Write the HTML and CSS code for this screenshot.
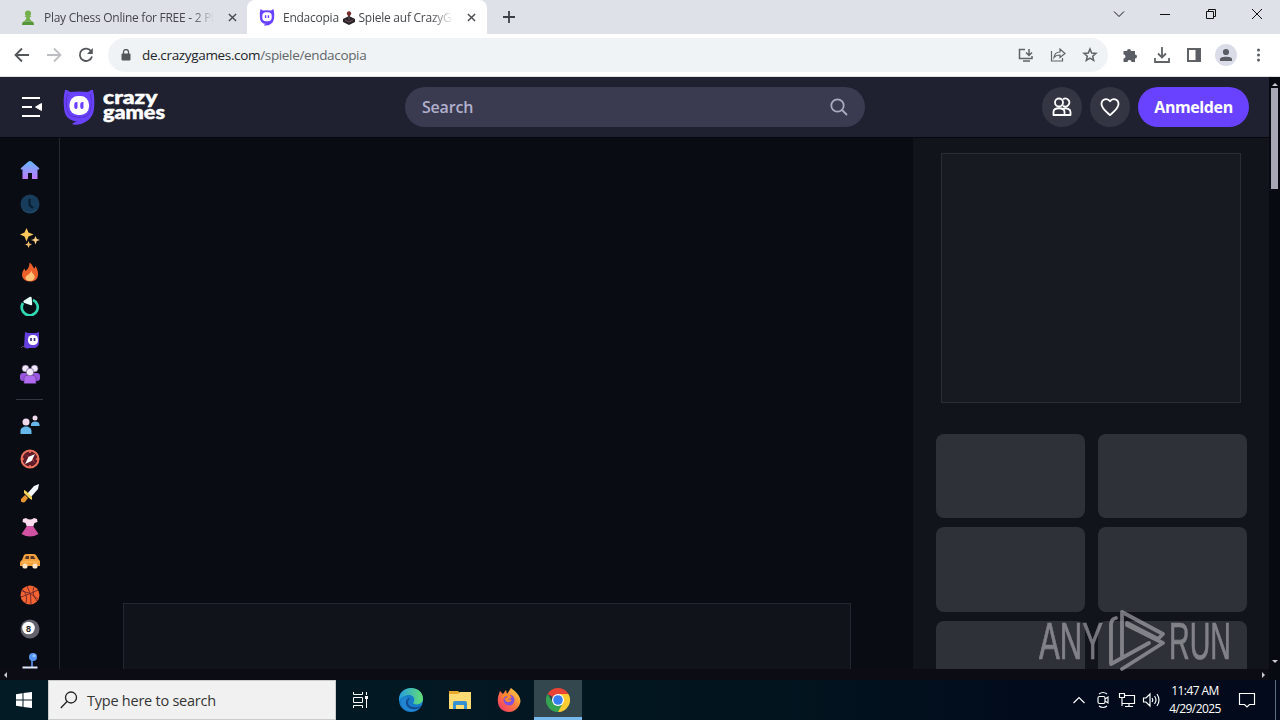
FILE: index.html
```html
<!DOCTYPE html>
<html lang="de">
<head>
<meta charset="utf-8">
<title>Endacopia - CrazyGames</title>
<link rel="stylesheet" href="styles.css">
</head>
<body>
<div class="tabs">
  <div class="tab">
    <svg class="fav" viewBox="0 0 16 16"><g fill="#74b04c"><circle cx="8" cy="4" r="3.1"/><path d="M4.400 6.500h7.200l-2 1.600c.2 2 1.200 2.800 2.800 4H3.600c1.600-1.200 2.600-2 2.800-4z"/><path d="M2 15.500c0-2.500 1-3.500 2-3.500h8c1 0 2 1 2 3.500z" fill="#55963b"/></g></svg>
    <span class="tabname first">Play Chess Online for FREE - 2 Pl</span>
    <svg class="x" viewBox="0 0 10 10"><path d="M1 1l8 8M9 1L1 9"/></svg>
  </div>
  <div class="tab active">
    <svg class="fav" viewBox="0 0 32 36"><path fill="#6842ff" d="M2 1Q3 0 7 3Q16 2 25 3Q29 0 30 1Q32 9 31 20Q30 28 24 32Q18 36 10 35Q8 33.500 14 32Q1 31 1 18Q0 8 2 1z"/><rect x="6" y="7" width="20" height="19" rx="8" fill="#fff"/><path d="M13 13v6M19 13v6" stroke="#6842ff" stroke-width="3"/></svg>
    <span class="tabname second">Endacopia <svg class="joy" viewBox="0 0 14 14"><path d="M1 8l6-3 6 3v3l-6 3-6-3z" fill="#292329"/><path d="M7 3v6" stroke="#453c40" stroke-width="2"/><circle cx="7" cy="2.500" r="2.200" fill="#792c2d"/><path d="M3 9l4 2 4-2" stroke="#78585a" fill="none"/></svg> Spiele auf CrazyGa</span>
    <svg class="x" viewBox="0 0 10 10"><path d="M1 1l8 8M9 1L1 9"/></svg>
  </div>
  <svg class="plus" viewBox="0 0 12 12"><path d="M6 0v12M0 6h12"/></svg>
  <div class="wincontrols">
    <svg viewBox="0 0 12 12"><path d="M1 3.500l5 5 5-5"/></svg>
    <svg viewBox="0 0 12 12"><path d="M1 6.500h10"/></svg>
    <svg viewBox="0 0 12 12"><path d="M1.500 3.500h7v7h-7zM3.500 3.500v-2h7v7h-2"/></svg>
    <svg viewBox="0 0 12 12"><path d="M1 1l10 10M11 1L1 11"/></svg>
  </div>
</div>
<div class="toolbar">
  <svg class="nav" viewBox="0 0 16 16"><path d="M15 8H2M8 1.500L1.500 8 8 14.500"/></svg>
  <svg class="nav off" viewBox="0 0 16 16"><path d="M1 8h13M8 1.500L14.500 8 8 14.500"/></svg>
  <svg class="nav" viewBox="0 0 16 16"><path d="M13.300 4.500A6.200 6.200 0 1 0 14 9.500"/><path d="M14.800 1v6H9z" fill="#53565a" stroke="none"/></svg>
  <div class="address">
    <svg class="lock" viewBox="0 0 10 12"><rect y="4.500" x=".5" width="9" height="7" rx="1" fill="#53565a"/><path d="M2.500 5V3a2.500 2.500 0 0 1 5 0v2" fill="none" stroke="#53565a" stroke-width="1.300"/></svg>
    <span class="url"><b>de.crazygames.com</b>/spiele/endacopia</span>
    <div class="addressicons">
      <svg viewBox="0 0 16 16"><path d="M7 2.500H1.500v9H14V9M5 14h7M11 2v6M8 5.500l3 3 3-3"/></svg>
      <svg viewBox="0 0 16 16"><path d="M1.500 4v10h11v-3M4 10.500c.5-4 3-5.500 6-5.500V2l5 4.500-5 4V8c-3 0-4.500.5-6 2.500z" stroke-width="1.200"/></svg>
      <svg viewBox="0 0 16 16"><path d="M8 2l1.700 4 4.300.4-3.300 2.900 1 4.200L8 11.200l-3.700 2.300 1-4.200L2 6.400 6.300 6z"/></svg>
    </div>
  </div>
  <div class="tools">
    <svg viewBox="0 0 16 16"><path class="solid" d="M1.500 4H5a2 2 0 1 1 4 0h4v3.500a2 2 0 1 1 0 4V15H9.500a2 2 0 0 0-4 0h-4v-3.500a2 2 0 0 0 0-4z"/></svg>
    <svg viewBox="0 0 16 16"><path d="M8 0v10M4 6.500l4 4 4-4M1 11v4h14v-4" stroke-width="1.800"/></svg>
    <svg viewBox="0 0 16 16"><path d="M2 2h12v12H2z" stroke-width="2"/><path class="solid" d="M9.500 2H14v12H9.500z"/></svg>
    <div class="avatar"><svg viewBox="0 0 16 16"><circle class="solid" cx="8" cy="5" r="3.100"/><path class="solid" d="M2 14v-2c0-3 12-3 12 0v2z"/></svg></div>
    <svg viewBox="0 0 16 16"><g class="solid"><circle cx="8.500" cy="3" r="1.500"/><circle cx="8.500" cy="8" r="1.500"/><circle cx="8.500" cy="13" r="1.500"/></g></svg>
  </div>
</div>
<div class="page">
  <div class="site">
    <header>
      <svg class="menu" viewBox="0 0 22 20"><path d="M1 1h18M1 10h10M1 19h18" stroke="#fff" stroke-width="1.800"/><path d="M14.500 10l6-3.500v7z" fill="#fff" stroke="#fff" stroke-linejoin="round"/></svg>
      <svg class="mascot" viewBox="0 0 32 36"><path fill="#6842ff" d="M2 1Q3 0 7 3Q16 2 25 3Q29 0 30 1Q32 9 31 20Q30 28 24 32Q18 36.500 10 35.500Q8 34 14 32.500Q1 31 1 18Q0 8 2 1z"/><path d="M5 5c-3 5-2 17 2 21 5 3 14 3 18 0 4-5 4-15 2-21" fill="none" stroke="#5632cf"/><rect x="6.500" y="7" width="19.500" height="19" rx="8.500" fill="#fff"/><path d="M11.500 14q1-1.500 3-1v5.500q0 1.500-2 1.500-2-1-1-6zM17.500 14q1-1.500 3-1v5.500q0 1.500-2 1.500-2-1-1-6z" fill="#6842ff"/></svg>
      <svg class="wordmark" viewBox="0 0 64 37"><text x="0" y="14.500" textLength="54.500" lengthAdjust="spacingAndGlyphs">crazy</text><text x="0" y="30" textLength="62" lengthAdjust="spacingAndGlyphs">games</text></svg>
      <div class="search"><span>Search</span><svg viewBox="0 0 18 18"><circle cx="7.500" cy="7.500" r="6.200"/><path d="M12 12l5 5"/></svg></div>
      <div class="actions">
        <div class="round"><svg viewBox="0 0 20 20"><circle cx="7" cy="5.500" r="4"/><path d="M11 2.200a4 4 0 1 1 0 6.600M1.500 18v-3c0-5 11-5 11 0v3zM11 11.700c4-1 7.500.5 7.500 3.300v3h-6"/></svg></div>
        <div class="round"><svg viewBox="0 0 20 20"><path d="M10 18C6 14.500 1.500 11.500 1.500 7c0-5 6-6.500 8.500-2.700C12.500.5 18.500 2 18.500 7c0 4.500-4.500 7.500-8.500 11z"/></svg></div>
        <div class="login">Anmelden</div>
      </div>
    </header>
    <div class="content">
      <aside>
        <svg viewBox="0 0 20 20"><defs><linearGradient id="home" x2="0" y2="1"><stop stop-color="#64b8ff"/><stop offset="1" stop-color="#c078f8"/></linearGradient></defs><path d="M1 9.500Q0 9 1.500 7.500l7-6q1.500-1 3 0l7 6q1.500 1.500.5 2h-1.500V19H12v-6H8v6H2.500V9.500z" fill="url(#home)"/></svg>
        <svg viewBox="0 0 20 20"><circle cx="10" cy="10" r="9.500" fill="#183c5c"/><path d="M9.500 5v6l3.500 3" stroke="#071b2c" stroke-width="2" fill="none"/><path d="M3 16q7 5 14 0" stroke="#254f66" fill="none"/></svg>
        <svg viewBox="0 0 20 20"><path d="M6.500 0L8.500 4.500l5 2-5 2-2 5-2-5-4.500-2 4.500-2z" fill="#ffc85b"/><path d="M15.500 8l1.300 3 3.200 1-3.200 1-1.300 3.500-1.300-3.500-3.200-1 3.200-1z" fill="#ffcf85"/><path d="M8.500 13l1 2.500 2.500 1-2.500 1-1 2.500-1-2.500-2.500-1 2.500-1z" fill="#f5bd6b"/></svg>
        <svg viewBox="0 0 20 20"><path d="M9.500.5c4 3 3 5 5 6l1-2.500c4 6 4 15.500-5 15.500S0 12 4.500 6.500l1 2.500c3-2 4-5 4-8.500z" fill="#ed602a"/><path d="M11.500 8c0 4 4 4 3 8-1 4-9 4-9 0 0-3 6-4 6-8z" fill="#ffc276"/></svg>
        <svg viewBox="0 0 20 20"><path d="M3 7a8 8 0 1 0 10-3" fill="none" stroke="#32d8b2" stroke-width="2.700"/><path d="M4 4.500L9.500 1q2-1 2.200 1l.5 6q0 2-2 1L4.500 7q-2-1-.5-2.500z" fill="#e8fff7"/></svg>
        <svg viewBox="0 0 20 20"><path d="M5 2l3 1h8l3-1v10q0 6-6 6H9q-2 1.500-5-1z" fill="#6640df"/><rect x="8" y="5" width="10" height="10" rx="4.500" fill="#fff"/><path d="M11 8v3M14.500 8v3" stroke="#42298b" stroke-width="1.700"/><path d="M1 18l2-2 3 2" fill="none" stroke="#56466e"/></svg>
        <svg viewBox="0 0 20 20"><g fill="#9856df"><rect x="0" y="9" width="9" height="8" rx="3"/><rect x="11" y="9" width="9" height="8" rx="3"/><path d="M4 19.500v-5c0-5 12-5 12 0v5z" fill="#b06af0" stroke="#56337c" stroke-width=".6"/></g><g fill="#f2e8ff" stroke="#514168" stroke-width=".6"><circle cx="5.500" cy="4.500" r="3.500"/><circle cx="14.500" cy="4.500" r="3.500"/><circle cx="10" cy="8" r="3.800"/></g></svg>
        <hr>
        <svg viewBox="0 0 20 20"><g fill="#65b8e9"><path d="M.5 19v-3c0-6 11-6 11 0v3zM11 11V9.500c0-4 8.500-4 8.500 0V11z"/></g><g fill="#eed9ed"><circle cx="6" cy="7" r="3.500"/><circle cx="15" cy="3" r="2.500"/></g></svg>
        <svg viewBox="0 0 20 20"><circle cx="10" cy="10" r="8.500" fill="#5e1b2a" stroke="#ed7560" stroke-width="2"/><path d="M5 6l4 2 6 6-3-6z" fill="#b54742"/><path d="M5 15l3.500-7L15 5l-3.500 7z" fill="#fff"/><path d="M10 2v2m8 6h-2m-6 8v-2M2 10h2" stroke="#ff6c52" stroke-width="1.500"/></svg>
        <svg viewBox="0 0 20 20"><path d="M7 11l7-8 5-2-1 5-7 8z" fill="#f4f6ff"/><path d="M4 7l2 1 6 6v3l-3-2-5-5z" fill="#f4d35a"/><path d="M1 16l4-4 3 3-3 4q-2 1-4-.5z" fill="#e89530"/></svg>
        <svg viewBox="0 0 20 20"><path d="M3 2l3-1q4 3 8 0l3 1 .5 3-3 1-1.500 4H7L5.500 6l-3-1z" fill="#ffdced"/><path d="M7 9h6l5.500 8q-8.500 5-17 0z" fill="#d152a2"/></svg>
        <svg viewBox="0 0 20 20"><path d="M2 9l2-5q1-1 3-1h6q2 0 3 1l3 5q2 1 1 6H0q-.5-5 2-6z" fill="#f5a13c"/><path d="M5 8l1-3h3v3zm5.500 0V5h3l2 3z" fill="#563626"/><path d="M2 11h16" stroke="#fbc264"/><circle cx="5" cy="15" r="2.600" fill="#ffe4c6"/><circle cx="15" cy="15" r="2.600" fill="#ffe4c6"/></svg>
        <svg viewBox="0 0 20 20"><circle cx="10" cy="10" r="9.500" fill="#f46432"/><path d="M2 6q9 1 16 8M1 12Q10 9 18 5M7 1q5 8 4 18M14 2q-3 7 3 14M3 5q5 5 3 13" fill="none" stroke="#7a2c2b"/></svg>
        <svg viewBox="0 0 20 20"><circle cx="10" cy="10" r="9.500" fill="#62616c"/><circle cx="8.500" cy="9" r="6.300" fill="#fff"/><text class="eight" x="8.500" y="12.500">8</text></svg>
        <svg viewBox="0 0 20 20"><path d="M12 5v9" stroke="#4d79cf" stroke-width="2"/><circle cx="13" cy="4" r="4" fill="#5795f5"/><circle cx="14" cy="2.700" r="1.500" fill="#9dc7ff"/><rect x="2.500" y="13.500" width="15" height="2" fill="#e1e9ff"/></svg>
      </aside>
      <main><div class="gamead"></div></main>
      <section class="rail">
        <div class="sidead"></div>
        <div class="cards"><i></i><i></i><i></i><i></i><i></i><i></i></div>
      </section>
    </div>
    <div class="hscroll"><svg viewBox="0 0 6 6"><path d="M5 0v6L2 3z"/></svg><svg viewBox="0 0 6 6"><path d="M2 0v6l3-3z"/></svg></div>
  </div>
  <div class="vscroll"><svg viewBox="0 0 6 6"><path d="M0 5h6L3 2z"/></svg><div class="thumb"></div><svg viewBox="0 0 6 6"><path d="M0 1h6L3 4z"/></svg></div>
  <svg class="watermark" viewBox="0 0 194 64"><text x="0" y="50" textLength="64" lengthAdjust="spacingAndGlyphs">ANY</text><g fill="none" stroke-width="3.800" stroke-linejoin="round" stroke-linecap="round"><path d="M77 9q-5 1-5 7v39l38-21"/><path d="M83 47V3l41 22-5 5-31-16"/><path d="M88 16l36 18-41 26"/></g><text x="130" y="50" textLength="62" lengthAdjust="spacingAndGlyphs">RUN</text></svg>
</div>
<div class="taskbar">
  <div class="start"><svg viewBox="0 0 16 16"><path fill="#fff" d="M0 2.200l6.500-1v6.300H0zM7.500 1L16 0v7.500H7.500zM0 8.500h6.500v6.300l-6.500-1zM7.500 8.500H16V16l-8.500-1z"/></svg></div>
  <div class="winsearch"><svg viewBox="0 0 18 18"><circle cx="11" cy="6.500" r="5.500"/><path d="M7 10.500L.8 17"/></svg><span>Type here to search</span></div>
  <div class="apps">
    <div><svg class="taskview" viewBox="0 0 18 18"><path d="M2.500 1v2.500h9V1M2.500 17v-2.500h9V17M2.500 6.500h9v5h-9zM15.500 1v3m0 4v9"/><path d="M14 5h3v3h-3z" fill="#fff" stroke="none"/></svg></div>
    <div><svg class="app" viewBox="0 0 24 24"><defs><linearGradient id="edge"><stop stop-color="#249dde"/><stop offset="1" stop-color="#63df76"/></linearGradient></defs><circle cx="12" cy="12" r="12" fill="#167bc8"/><path d="M0 11C1-4 24-3 24 11c0 5-7 7-10 4 4-5-2-10-8-7Q2 9 0 13z" fill="url(#edge)"/><path d="M8 9c-3 8 3 14 12 12-7 5-16 2-18-5-1-4 2-7 6-7z" fill="#2185d2"/><path d="M11 10c-5 6 0 12 11 8-5 6-16 3-15-4 0-2 2-4 4-4z" fill="#154b90"/></svg></div>
    <div><svg class="app" viewBox="0 0 24 24"><path d="M1 3h9l2 2h11v16H1z" fill="#e6a92b"/><path d="M1 6h9l2-2h11v17H1z" fill="#ffdc73"/><path d="M5 21v-6q0-2 2-2h10q2 0 2 2v6h-3v-4H8v4z" fill="#3790d0"/></svg></div>
    <div><svg class="app" viewBox="0 0 24 24"><defs><linearGradient id="fox" x1="1" x2="0" y2="1"><stop stop-color="#ffe43f"/><stop offset=".5" stop-color="#ff793f"/><stop offset="1" stop-color="#f02d6f"/></linearGradient></defs><path d="M3 3l3 3 3-4 1 4 4-6c4 3 9 7 9.500 13C23 19 18 24 12 24S1 20 .8 13C.5 9 2 6 3 3z" fill="url(#fox)"/><circle cx="12" cy="12" r="5.500" fill="#8150dc"/><path d="M5 9q5-4 8 0l-4 2q1 3 5 1" fill="none" stroke="#ff8a28" stroke-width="2.400"/></svg></div>
    <div class="current"><svg class="app" viewBox="0 0 24 24"><path d="M12 12L1.600 6A12 12 0 0 1 22.400 6z" fill="#ea4335"/><path d="M12 12V6h10.400A12 12 0 0 1 12 24z" fill="#fbcc31"/><path d="M12 24A12 12 0 0 1 1.600 6L7 15l5 3 5-3z" fill="#36a352"/><circle cx="12" cy="12" r="6" fill="#fff"/><circle cx="12" cy="12" r="4.800" fill="#377ef0"/></svg></div>
  </div>
  <div class="tray">
    <svg viewBox="0 0 18 18"><path d="M3.500 12L9 6.500l5.500 5.500"/></svg>
    <svg viewBox="0 0 18 18"><rect x="4" y="5.500" width="7" height="7" rx="1.500"/><path d="M11 8l3-2v6l-3-2M5 3q4-3 8 0M5 15q4 3 8 0"/></svg>
    <svg viewBox="0 0 18 18"><path d="M6 4.500h10.500v8H4V7M11 13v2.500M7 15.500h8M1.500 2.500h5v4h-5zM4 7v8"/></svg>
    <svg viewBox="0 0 18 18"><path d="M1.500 7H4l4-4v12l-4-4H1.500zM10 7q1.500 2 0 4M12.500 5q3 4 0 8M15 3q4 6 0 12"/></svg>
    <div class="clock"><div>11:47 AM</div><div>4/29/2025</div></div>
    <svg class="notice" viewBox="0 0 18 18"><path d="M1.500 2.500h15v11h-5L9 16l-2.500-2.500h-5z"/></svg>
    <div class="peek"></div>
  </div>
</div>
</body>
</html>
```

FILE: styles.css
```css
* { box-sizing: border-box; }
body { margin: 0; width: 1280px; height: 720px; overflow: hidden; display: flex; flex-direction: column; font-family: "Open Sans", "Noto Sans", sans-serif; }
svg { display: block; flex: none; }
.tabs { height: 34px; background: #dee1e8; display: flex; align-items: center; flex: none; }
.tab { display: flex; align-items: center; height: 34px; width: 247px; padding-left: 20px; }
.tab.active { width: 240px; padding-left: 12px; background: #fff; border-radius: 8px 8px 0 0; }
.fav { width: 16px; height: 17px; }
.tabname { font-size: 12px; color: #45474b; white-space: nowrap; overflow: hidden; margin-left: 8px; width: 170px; mask-image: linear-gradient(90deg, #000 87%, transparent); }
.first { letter-spacing: -.27px; }
.second { letter-spacing: -.25px; }
.joy { display: inline; width: 14px; height: 14px; vertical-align: -3px; }
.x { width: 9px; height: 9px; margin-left: 13.5px; stroke: #484b50; stroke-width: 1.6; }
.plus { width: 12px; height: 12px; margin-left: 16px; stroke: #3c4046; stroke-width: 1.8; }
.wincontrols { display: flex; gap: 34px; margin: -6px 17px 0 auto; }
.wincontrols svg { width: 12px; height: 12px; stroke: #111; fill: none; }
.toolbar { height: 43px; flex: none; display: flex; align-items: center; background: #fff; border-bottom: 1px solid #dddfe5; padding-left: 14px; }
.nav { width: 16px; height: 16px; margin-right: 16px; fill: none; stroke: #53565a; stroke-width: 1.8; }
.nav.off { stroke: #bcbec1; }
.nav:nth-child(3) { margin-right: 14px; }
.address { width: 1000px; height: 34px; display: flex; align-items: center; background: #f0f3f5; border-radius: 17px; padding: 0 10px 0 13px; }
.lock { width: 10px; height: 12px; }
.url { margin-left: 11px; font-size: 13.5px; letter-spacing: -.34px; color: #62666b; }
.url b { font-weight: 400; color: #222529; }
.addressicons { display: flex; gap: 16px; margin-left: auto; }
.addressicons svg, .tools svg { width: 16px; height: 16px; fill: none; stroke: #5f6368; stroke-width: 1.5; }
.tools { display: flex; align-items: center; gap: 16px; margin-left: 14px; }
.tools .solid { fill: #5a5e64; stroke: none; }
.avatar { display: grid; place-items: center; width: 22px; height: 22px; border-radius: 50%; background: #dadde8; margin: 0 -3px; }
.page { position: relative; height: 603px; display: flex; flex: none; background: #080a11; }
.site { width: 1269px; }
header { height: 60px; background: #1f2030; display: flex; align-items: center; padding-left: 21px; }
.menu { width: 22px; height: 20px; }
.mascot { width: 32px; height: 36px; margin-left: 20px; }
.wordmark { width: 64px; height: 37px; margin-left: 8px; }
.wordmark text { font: 900 19.5px Lato, sans-serif; fill: #fff; stroke: #fff; stroke-width: .5px; stroke-linejoin: round; }
.search { width: 460px; height: 40px; margin-left: 238px; border-radius: 20px; background: #3a3a51; display: flex; align-items: center; justify-content: space-between; padding: 0 17px; color: #b1b0cc; font: 600 16px "Open Sans", sans-serif; letter-spacing: -.2px; }
.search svg { width: 18px; height: 18px; stroke: #aaaac2; stroke-width: 1.8; fill: none; }
.actions { display: flex; gap: 8px; margin-left: 177px; }
.round { width: 40px; height: 40px; border-radius: 50%; background: #343543; display: grid; place-items: center; }
.round svg { width: 20px; height: 20px; fill: none; stroke: #fff; stroke-width: 1.8; stroke-linejoin: round; }
.login { height: 40px; width: 111px; border-radius: 20px; background: #6842ff; color: #fff; font: 700 16px/40px "Open Sans", sans-serif; text-align: center; letter-spacing: -.4px; }
.content { height: 532px; display: flex; overflow: hidden; background: #0a0c13; border-top: 1px solid #07080e; }
aside { width: 60px; flex: none; border-right: 1px solid #272931; padding: 22px 0 0 20px; display: flex; flex-direction: column; gap: 14px; }
aside svg { width: 20px; height: 20px; }
aside hr { width: 27px; height: 1px; border: 0; background: #343640; margin: 1px 0 1px -4px; flex: none; }
.eight { font: 700 9px "Liberation Sans", sans-serif; text-anchor: middle; fill: #222; }
main { width: 853px; flex: none; padding: 465px 0 0 63px; }
.gamead { width: 728px; height: 90px; background: #11131b; border: 1px solid #252730; }
.rail { width: 356px; flex: none; background: #12141c; padding: 15px 22px 0 23px; }
.sidead { width: 300px; height: 250px; margin-left: 5px; border: 1px solid #2b2d35; background: #181a22; }
.cards { display: grid; grid-template-columns: 149px 149px; column-gap: 13px; row-gap: 9.3px; margin-top: 31px; }
.cards i { height: 84.2px; border-radius: 8px; background: #2f3139; }
.hscroll { height: 11px; background: #0c0d14; display: flex; align-items: center; justify-content: space-between; padding: 0 3px 0 2px; }
.hscroll svg, .vscroll svg { width: 6px; height: 6px; fill: #c9cad4; }
.vscroll { width: 11px; background: #080a11; display: flex; flex-direction: column; align-items: center; padding: 4px 0 15px; }
.thumb { width: 7px; height: 101px; background: #a6a6b5; margin: 1px 0 auto; }
.watermark { position: absolute; left: 1039px; top: 532px; width: 194px; height: 64px; opacity: .57; stroke: #c0c0c5; }
.watermark text { font: 52px "Liberation Sans", sans-serif; fill: #c0c0c5; stroke-width: .7px; }
.taskbar { height: 40px; display: flex; flex: none; background: linear-gradient(90deg, #021b25, #02151f 60%, #020b1c 80%, #020a1b); color: #fff; }
.start { width: 48px; display: grid; place-items: center; }
.start svg { width: 16px; height: 16px; }
.winsearch { width: 288px; background: #f1f1f1; border: 1px solid #c9cccd; display: flex; align-items: center; padding-left: 11px; color: #353535; font-size: 14.5px; letter-spacing: -.24px; }
.winsearch svg { width: 18px; height: 18px; fill: none; stroke: #222; stroke-width: 1.3; }
.winsearch span { margin-left: 9px; }
.apps { display: flex; gap: 1px; }
.apps > div { width: 48px; display: grid; place-items: center; }
.apps > div:first-child { margin-right: 2px; }
.apps .taskview { width: 18px; height: 18px; fill: none; stroke: #fff; }
.app { width: 24px; height: 24px; }
.apps .current { background: #33474f; border-bottom: 3px solid #76b9ed; padding-top: 3px; }
.tray { display: flex; align-items: center; margin-left: auto; }
.tray svg { width: 18px; height: 18px; margin-right: 6px; fill: none; stroke: #fff; stroke-width: 1.15; }
.clock { width: 58px; margin: 0 14px 0 0; font-size: 12px; line-height: 18px; text-align: center; letter-spacing: -.6px; white-space: nowrap; }
.tray .notice { margin-right: 19px; }
.peek { width: 5px; height: 40px; border-left: 1px solid #607080; }
```
